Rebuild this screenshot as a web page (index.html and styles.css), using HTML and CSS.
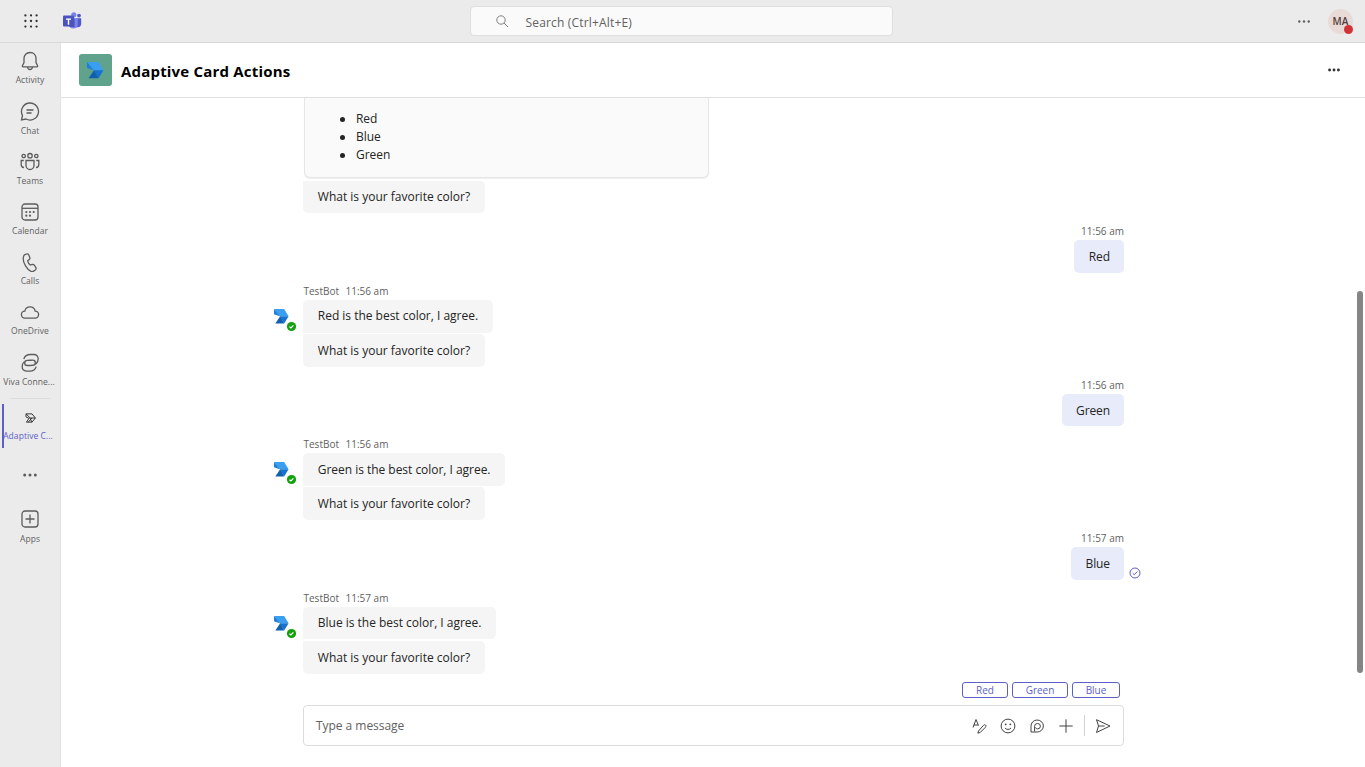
FILE: index.html
```html
<!DOCTYPE html>
<html lang="en">
<head>
<meta charset="utf-8">
<title>Adaptive Card Actions</title>
<link rel="stylesheet" href="styles.css">
</head>
<body>
<svg class="defs" width="0" height="0">
  <defs>
    <g id="bot">
      <path d="M0 0h11.500L16.500 8.300H6.500L4.500 6z" fill="#3a9ff0"/>
      <path d="M0 0l4.500 5.500 2 2.800L0 6z" fill="#1f7fd6"/>
      <path d="M6.500 8.300h10l-5 8z" fill="#1573cf"/>
      <path d="M1.500 16.300L7 8.300l4.500 8z" fill="#1060ae"/>
    </g>
    <g id="ok"><circle cx="5" cy="5" r="4.600" fill="#13a10e"/><path d="M3 5.200l1.400 1.300 2.500-2.700" fill="none" stroke="#fff" stroke-width="1.200"/></g>
  </defs>
</svg>
<header class="topbar">
  <svg class="waffle" width="14" height="14" viewBox="0 0 14 14" fill="#333"><circle cx="1.400" cy="1.400" r="1.150"/><circle cx="7" cy="1.400" r="1.150"/><circle cx="12.600" cy="1.400" r="1.150"/><circle cx="1.400" cy="7" r="1.150"/><circle cx="7" cy="7" r="1.150"/><circle cx="12.600" cy="7" r="1.150"/><circle cx="1.400" cy="12.600" r="1.150"/><circle cx="7" cy="12.600" r="1.150"/><circle cx="12.600" cy="12.600" r="1.150"/></svg>
  <svg class="logo" width="19" height="18" viewBox="0 0 19 18"><circle cx="16" cy="3.600" r="1.900" fill="#5059c9"/><path d="M12.500 6.300h5.700v5.200c0 2.500-1.400 3.800-3.200 3.800h-2.500z" fill="#5059c9"/><circle cx="10.800" cy="2.800" r="2.600" fill="#7b83eb"/><path d="M6 6.300h8.800v6c0 3-1.800 4.300-4.500 4.300-2.500 0-4.300-1.300-4.300-3.800z" fill="#7b83eb"/><path d="M6 6.300h5.600V15H6.500z" fill="#5059b9"/><rect y="3.600" width="11" height="11" rx="1" fill="#4b53bc"/><path d="M3 6.400h5v1.300H6.200v5H4.800v-5H3z" fill="#fff"/></svg>
  <div class="search">
    <svg width="13" height="13" viewBox="0 0 13 13" fill="none" stroke="#808080"><circle cx="5" cy="5" r="4.200"/><path d="M8 8l4 4"/></svg>
    <span>Search (Ctrl+Alt+E)</span>
  </div>
  <svg class="more-top" width="12" height="3" viewBox="0 0 12 3" fill="#616161"><circle cx="1.300" cy="1.500" r="1.200"/><circle cx="6" cy="1.500" r="1.200"/><circle cx="10.700" cy="1.500" r="1.200"/></svg>
  <div class="avatar">MA<i class="busy"></i></div>
</header>
<div class="body">
  <nav class="rail">
    <a class="item"><svg viewBox="0 0 20 20"><path d="M10 1.500c-3.600 0-6 2.600-6 6v4L2.400 14.800c-.2.600 0 1 .6 1h14c.6 0 .8-.4.600-1L16 11.500v-4c0-3.400-2.400-6-6-6zM7.500 16c.2 1.600 1.200 2.500 2.500 2.500s2.300-.9 2.500-2.500"/></svg><span>Activity</span></a>
    <a class="item"><svg viewBox="0 0 20 20"><path d="M10 2a8.500 8.500 0 1 1-4 16l-4.500 1 1-4.500A8.500 8.500 0 0 1 10 2zM6.500 9h7M6.500 12h5"/></svg><span>Chat</span></a>
    <a class="item"><svg viewBox="0 0 20 20"><g transform="translate(0 1)"><circle cx="3.700" cy="4" r="1.700"/><circle cx="10" cy="3.700" r="2.200"/><circle cx="16.300" cy="4" r="1.700"/><path d="M6 8.500h8v5a4 4 0 0 1-8 0zM3.800 8.500H1.200v4c0 1.800 1.200 3 2.800 3M16.200 8.500h2.600v4c0 1.800-1.200 3-2.800 3"/></g></svg><span>Teams</span></a>
    <a class="item"><svg viewBox="0 0 20 20"><rect x="2" y="2" width="16" height="16" rx="3"/><path d="M2 6.300h16"/><g fill="#5c5c5c" stroke="none"><circle cx="6.300" cy="10" r="1.100"/><circle cx="10" cy="10" r="1.100"/><circle cx="13.700" cy="10" r="1.100"/><circle cx="6.300" cy="13.700" r="1.100"/><circle cx="10" cy="13.700" r="1.100"/></g></svg><span>Calendar</span></a>
    <a class="item"><svg viewBox="0 0 20 20"><path transform="translate(0 .8)" d="M5.300 1.600l1.300-.4c1-.3 1.800.2 2.200 1l1 2.400c.3.800.1 1.500-.5 2L7.700 8c.3 1.500 1.300 3.200 2.600 4.300l2-.6c.8-.2 1.500 0 2 .7l1.500 2.100c.5.800.4 1.700-.2 2.300l-1 1c-1 .9-2.300 1.200-3.600.7-4-1.500-8-8.500-7.800-13 .1-1.900.7-3.400 2.100-3.900z"/></svg><span>Calls</span></a>
    <a class="item"><svg viewBox="0 0 20 20"><path d="M5 16.200a3.500 3.500 0 0 1-.2-7 5.300 5.300 0 0 1 10.400 0 3.500 3.500 0 0 1-.2 7z"/></svg><span>OneDrive</span></a>
    <a class="item"><svg viewBox="0 0 20 20"><path transform="translate(0 .8)" d="M8.500 12.500h4.200a2.600 2.600 0 0 0 0-5.200H9.500C5 7.300 2.200 10 2.200 13.800c0 2.700 1.600 4.500 4.300 4.500H10c3.700 0 5.400-1.900 6.200-4.500M11.500 7.500H7.300a2.600 2.600 0 0 0 0 5.200h3.200c4.500 0 7.700-2.700 7.700-6.500 0-2.700-1.600-4.500-4.300-4.500H10.500C6.800 1.700 4.600 3.600 3.800 6.200"/></svg><span class="wide">Viva Conne...</span></a>
    <hr class="sep">
    <a class="item active"><svg viewBox="0 0 20 20"><path d="M4 4.500h8l4.500 5.500-4.500 5.500H4.500l3.500-5-4-2zM4 4.500l5.500 5.500h7M9 10l3 5.500M12 10l-5 5.500"/></svg><span>Adaptive C...</span></a>
    <svg class="dots" width="14" height="4" viewBox="0 0 14 4" fill="#5c5c5c"><circle cx="1.700" cy="2" r="1.500"/><circle cx="7" cy="2" r="1.500"/><circle cx="12.300" cy="2" r="1.500"/></svg>
    <a class="item apps"><svg viewBox="0 0 20 20"><rect x="2" y="2" width="16" height="16" rx="3"/><path d="M10 5.500v9M5.500 10h9"/></svg><span>Apps</span></a>
  </nav>
  <main class="main">
    <div class="title">
      <div class="appicon"><svg width="17" height="17" viewBox="0 0 17 17"><use href="#bot"/></svg></div>
      <h1>Adaptive Card Actions</h1>
      <svg class="more" width="12" height="4" viewBox="0 0 12 4" fill="#333"><circle cx="1.600" cy="2" r="1.450"/><circle cx="6" cy="2" r="1.450"/><circle cx="10.400" cy="2" r="1.450"/></svg>
    </div>
    <div class="chat">
      <div class="card"><ul><li>Red</li><li>Blue</li><li>Green</li></ul></div>
      <div class="bubble ask first">What is your favorite color?</div>
      <section class="turn">
        <div class="time">11:56 am</div>
        <div class="bubble me">Red</div>
        <div class="meta"><span>TestBot</span><span>11:56 am</span></div>
        <div class="bubble top">Red is the best color, I agree.<svg class="face" width="23" height="24"><svg width="15" height="15" viewBox="0 0 17 17"><use href="#bot"/></svg><use href="#ok" x="12.500" y="12.500"/></svg></div>
        <div class="bubble ask">What is your favorite color?</div>
      </section>
      <section class="turn">
        <div class="time">11:56 am</div>
        <div class="bubble me">Green</div>
        <div class="meta"><span>TestBot</span><span>11:56 am</span></div>
        <div class="bubble top mid">Green is the best color, I agree.<svg class="face" width="23" height="24"><svg width="15" height="15" viewBox="0 0 17 17"><use href="#bot"/></svg><use href="#ok" x="12.500" y="12.500"/></svg></div>
        <div class="bubble ask">What is your favorite color?</div>
      </section>
      <section class="turn">
        <div class="time">11:57 am</div>
        <div class="bubble me">Blue<svg class="seen" width="12" height="12" viewBox="0 0 12 12" fill="none" stroke="#5b5fc7"><circle cx="6" cy="6" r="5"/><path d="M3.700 6.200l1.600 1.500 3-3.200"/></svg></div>
        <div class="meta"><span>TestBot</span><span>11:57 am</span></div>
        <div class="bubble top">Blue is the best color, I agree.<svg class="face" width="23" height="24"><svg width="15" height="15" viewBox="0 0 17 17"><use href="#bot"/></svg><use href="#ok" x="12.500" y="12.500"/></svg></div>
        <div class="bubble ask">What is your favorite color?</div>
      </section>
      <div class="chips"><button class="w46">Red</button><button class="w56">Green</button><button class="w48">Blue</button></div>
      <div class="composer">
        <span class="ph">Type a message</span>
        <svg width="16" height="16" viewBox="0 0 16 16"><path d="M2 9.500L5 1.500l2.500 6M3 7h4.200M7.500 13l5-5.700c1.500-1.500 3.300.2 2 1.900l-5.300 5.300-2.400.6z"/></svg>
        <svg width="16" height="16" viewBox="0 0 16 16"><circle cx="8" cy="8" r="6.900"/><path d="M5 10c1.500 1.900 4.500 1.900 6 0"/><g fill="#424242" stroke="none"><circle cx="5.700" cy="6.300" r=".9"/><circle cx="10.300" cy="6.300" r=".9"/></g></svg>
        <svg width="16" height="16" viewBox="0 0 16 16"><path d="M2 14V8.400a6.200 6 0 1 1 6.300 5.600H2zM5.600 13.500V8.200a2.900 2.700 0 1 1 2.900 2.700c-1.300 0-1.900-.7-1.900-1.500"/></svg>
        <svg width="16" height="16" viewBox="0 0 16 16"><path d="M8 1.300v13.400M1.300 8h13.400"/></svg>
        <i class="bar"></i>
        <svg width="16" height="16" viewBox="0 0 16 16"><path d="M1.500 1.700L15 8 1.500 14.500l2-6.500zM3.700 8h6"/></svg>
      </div>
      <div class="thumb"></div>
    </div>
  </main>
</div>
</body>
</html>
```
FILE: styles.css
```css
* { box-sizing: border-box; }
body { margin: 0; height: 767px; overflow: hidden; font-family: "Open Sans", "Noto Sans", sans-serif; font-size: 12px; color: #242424; background: #fff; }
svg { display: block; flex: none; }
.defs { position: absolute; }
.topbar { height: 43px; background: #ebebeb; border-bottom: 1px solid #d9d9d9; display: flex; align-items: center; padding-left: 24px; }
.logo { margin-left: 25px; }
.search { width: 423px; height: 30px; margin-left: 388px; border: 1px solid #dedede; border-radius: 4px; background: #fafafa; display: flex; align-items: center; padding-left: 25px; gap: 16.500px; color: #616161; }
.search svg { margin-top: 0; }
.search span { padding-top: 3px; letter-spacing: .17px; }
.more-top { margin-left: 405px; }
.avatar { position: relative; width: 25px; height: 25px; margin-left: 18px; border-radius: 50%; background: #e8dad7; color: #54403b; font-size: 10px; font-weight: 600; line-height: 25px; text-align: center; }
.busy { position: absolute; right: 0; bottom: 0; width: 9px; height: 9px; border-radius: 50%; background: #d13438; }
.body { display: flex; height: 724px; }
.rail { width: 61px; background: #ebebeb; border-right: 1px solid #e2e2e2; display: flex; flex-direction: column; align-items: center; padding-top: 8px; }
.item { width: 60px; height: 50.2px; display: flex; flex-direction: column; align-items: center; color: #616161; font-size: 8.5px; line-height: 12.6px; gap: 3.4px; white-space: nowrap; flex: none; }
.item svg { width: 20px; height: 20px; fill: none; stroke: #5c5c5c; stroke-width: 1.3; }
.item span { letter-spacing: .05px; }
.item .wide { margin-left: -2px; }
.sep { width: 40px; height: 1px; border: 0; background: #dcdcdc; margin: -4px 0 5px; flex: none; }
.active { height: 44px; width: 56px; border-left: 2px solid #5b5fc7; padding-right: 2px; color: #5b5fc7; padding-top: 4px; gap: 1.4px; }
.active svg { stroke: #333; width: 15px; height: 20px; }
.active span { margin-left: -4px; }
.dots { margin: 25px 0 32px; }
.main { flex: 1; display: flex; flex-direction: column; }
.title { height: 55px; flex: none; border-bottom: 1px solid #dfdfdf; display: flex; align-items: center; padding: 0 25px 0 18px; }
.appicon { width: 33px; height: 32px; border-radius: 3px; background: #5fa38d; display: flex; align-items: center; justify-content: center; }
h1 { font-size: 15px; font-weight: 700; color: #000; margin: 2px auto 0 9px; letter-spacing: .19px; }
.chat { position: relative; width: 821px; margin-left: 242px; height: 669px; display: flex; flex-direction: column; align-items: flex-start; }
.card { width: 405px; height: 80px; border: 1px solid #e6e6e6; border-top: 0; border-radius: 0 0 6px 6px; background: #fafafa; margin-left: 1px; box-shadow: 0 1px 1px #0001; flex: none; }
ul { margin: 0; padding: 12px 0 0 51px; line-height: 18px; list-style: none; }
li { display: flex; align-items: center; height: 18px; letter-spacing: -.04px; }
li::before { content: ""; width: 5px; height: 5px; border-radius: 50%; background: #242424; margin: 0 11px 0 -16px; }
.bubble { position: relative; height: 32.7px; line-height: 33px; padding: 0 14.8px; background: #f5f5f5; border-radius: 5px; white-space: nowrap; flex: none; }
.ask { border-top-left-radius: 1px; line-height: 33.4px; }
.top { border-bottom-left-radius: 1px; margin-bottom: 1.4px; letter-spacing: -.015px; line-height: 32px; }
.mid { line-height: 33px; letter-spacing: -.03px; }
.first { margin-top: 2.5px; line-height: 32px; }
.turn { width: 100%; display: flex; flex-direction: column; align-items: flex-start; flex: none; }
.time, .meta { height: 18px; line-height: 18px; margin-top: 9px; font-size: 10px; color: #616161; }
.time, .me { align-self: flex-end; }
.meta { display: flex; gap: 6.5px; padding-left: .5px; }
.me { background: #e8ebfa; padding: 0 14px 0 14.5px; letter-spacing: -.1px; line-height: 33px; }
.face { position: absolute; left: -29px; top: 9px; }
.seen { position: absolute; right: -17px; top: 20px; }
.chips { align-self: flex-end; display: flex; gap: 4px; margin: 8px 4px 7px 0; flex: none; }
.chips button { height: 16px; padding: 0; border: 1px solid #5b5fc7; border-radius: 3px; background: #fff; color: #5b5fc7; font: 500 10px/14px "Open Sans", sans-serif; }
.w46 { width: 46px; } .w56 { width: 56px; } .w48 { width: 48px; }
.composer { width: 100%; height: 41px; border: 1px solid #dcdcdc; border-radius: 4px; display: flex; align-items: center; padding: 1px 12px 0; flex: none; gap: 13px; color: #616161; }
.ph { margin: 0 auto 1px 0; letter-spacing: -.04px; }
.composer svg { fill: none; stroke: #424242; stroke-width: 1; }
.bar { width: 1px; height: 21px; background: #d1d1d1; margin: 0 -3px; }
.thumb { position: absolute; left: 1054px; top: 193px; width: 6px; height: 382px; border-radius: 3px; background: #858585; }
```
